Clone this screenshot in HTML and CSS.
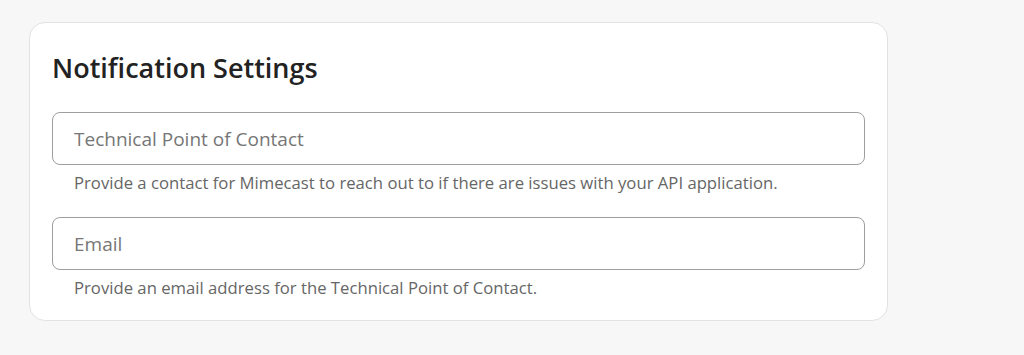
FILE: index.html
```html
<!DOCTYPE html>
<html lang="en">
<head>
    <meta charset="UTF-8">
    <meta name="viewport" content="width=device-width, initial-scale=1.0">
    <title>Notification Settings</title>
    <link rel="stylesheet" href="styles.css">
</head>
<body>
    <div class="card">
        <h2>Notification Settings</h2>

        <div class="field">
            <input type="text" id="tech-contact" name="techcontact" placeholder="Technical Point of Contact">
            <p class="hint">Provide a contact for Mimecast to reach out to if there are issues with your API application.</p>
        </div>

        <div class="field">
            <input type="text" id="email" name="email" placeholder="Email">
            <p class="hint">Provide an email address for the Technical Point of Contact.</p>
        </div>
    </div>
</body>
</html>
```

FILE: styles.css
```css
body {
    font-family: "Open Sans", Arial, sans-serif;
    margin: 0;
    padding: 22px 0 0 29px;
    background-color: #f7f7f7;
}
.card {
    width: 813px;
    background-color: #fff;
    border: 1px solid #e2e2e2;
    border-radius: 16px;
    padding: 29px 22px 21px 22px;
}
h2 {
    margin: 0 0 28px 0;
    font-size: 27px;
    line-height: 32px;
    font-weight: 600;
    color: #222;
}
.field + .field {
    margin-top: 23px;
}
input[type="text"] {
    display: block;
    box-sizing: border-box;
    width: 100%;
    height: 53px;
    padding: 0 21px;
    border: 1px solid #9e9e9e;
    border-radius: 8px;
    font-family: inherit;
    font-size: 19px;
    color: #333;
    outline: none;
}
input::placeholder {
    color: #767676;
}
.hint {
    margin: 7px 0 0 0;
    padding-left: 22px;
    font-size: 16.7px;
    line-height: 22px;
    color: #666;
}
```
